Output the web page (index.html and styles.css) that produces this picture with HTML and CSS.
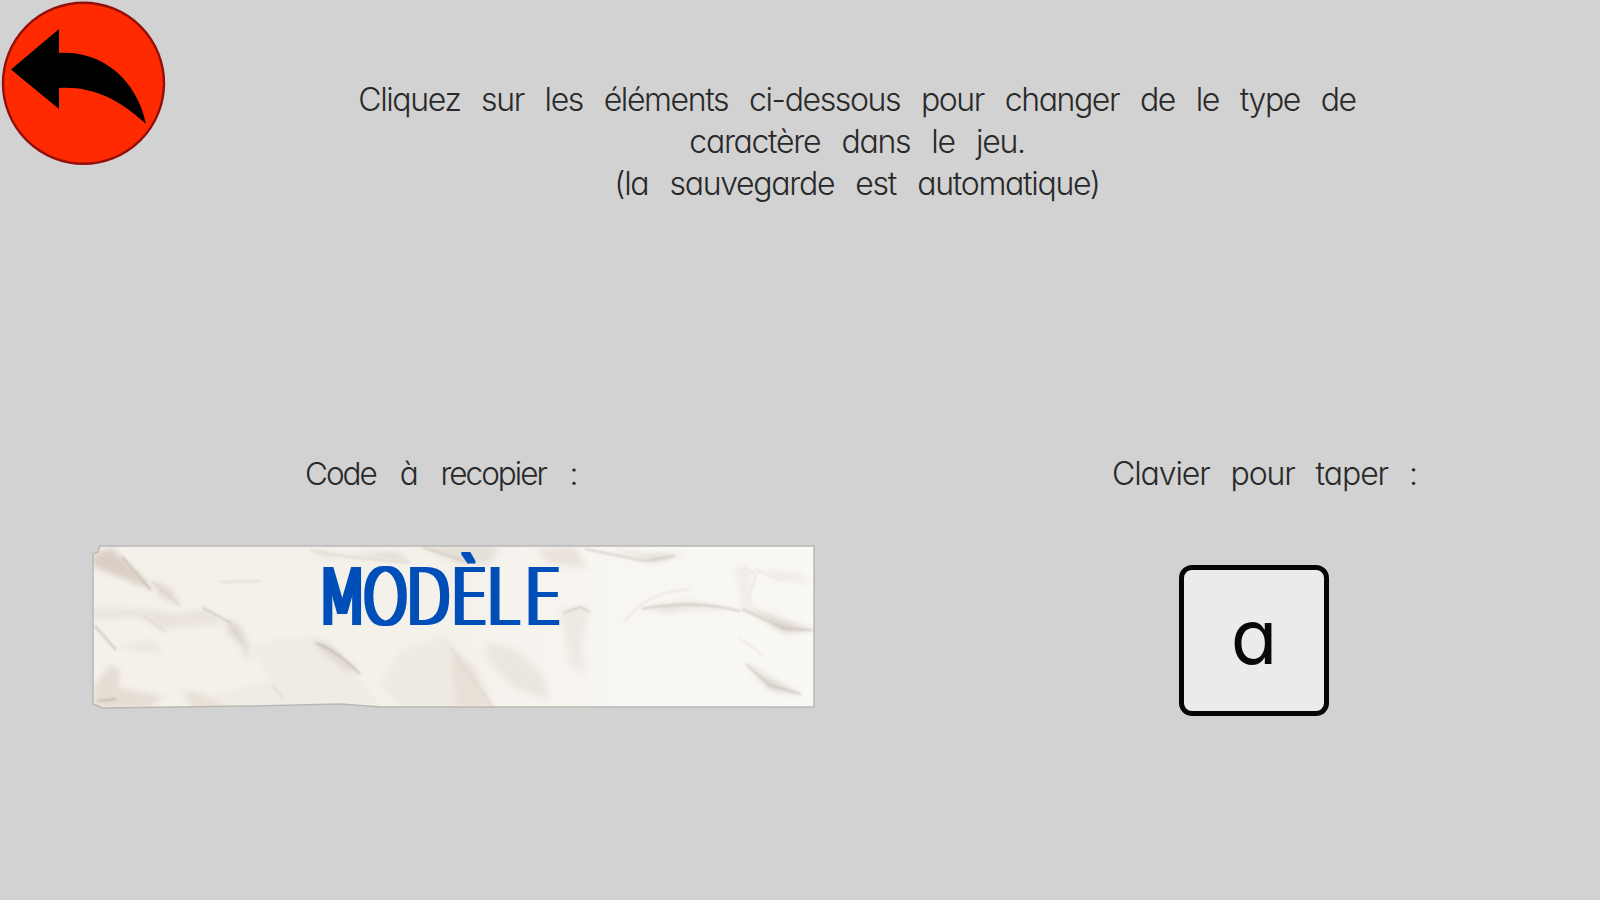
FILE: index.html
```html
<!DOCTYPE html>
<html lang="fr">
<head>
<meta charset="utf-8">
<title>Type de caractère</title>
<link rel="stylesheet" href="styles.css">
</head>
<body>
<main class="page">
  <header class="header">
    <a class="back" aria-label="Retour">
      <svg width="168" height="168" viewBox="0 0 168 168">
        <circle cx="83.5" cy="83.2" r="80.5" fill="#ff2a00" stroke="#920f0b" stroke-width="2.4"/>
        <path d="M11 69.5 L59 29 V53 C98 50 136 76 146 124 C119 99 92 86 59 88 V109 Z" fill="#000"/>
      </svg>
    </a>
    <p class="intro">
      <span class="line line-one">Cliquez sur les éléments ci-dessous pour changer de le type de</span>
      <span class="line">caractère dans le jeu.</span>
      <span class="line">(la sauvegarde est automatique)</span>
    </p>
  </header>
  <div class="choices">
    <section class="choice choice-model">
      <h2 class="label label-model">Code à recopier :</h2>
      <svg class="paper" width="724" height="166" viewBox="92 544 724 166">
        <defs>
          <clipPath id="sheet"><path d="M100 546 H814 V707 H382 L340 704 L250 706 L102 708 L93 704 V554 L98 552Z"/></clipPath>
          <filter id="soft" x="-10%" y="-10%" width="120%" height="120%"><feGaussianBlur stdDeviation="3"/></filter>
          <filter id="fine" x="-10%" y="-10%" width="120%" height="120%"><feGaussianBlur stdDeviation="1.1"/></filter>
          <filter id="broad" x="-10%" y="-30%" width="120%" height="160%"><feMorphology operator="dilate" radius="3 1"/></filter>
          <linearGradient id="base"><stop offset="0" stop-color="#f4f1eb"/><stop offset=".5" stop-color="#f4f1eb"/><stop offset=".72" stop-color="#f8f6f2"/><stop offset="1" stop-color="#f9f8f5"/></linearGradient>
        </defs>
        <g clip-path="url(#sheet)">
          <rect x="92" y="544" width="724" height="166" fill="url(#base)"/>
          <g filter="url(#soft)">
            <path d="M92 554 L112 548 L145 580 L152 590 L120 577 L92 566Z" fill="#dacfc4"/>
            <path d="M152 580 L170 588 L182 606 L160 597Z" fill="#e2d9d0"/>
            <path d="M93 608 L150 609 L180 614 L205 608 L225 624 L180 627 L163 631 L140 617 L93 619Z" fill="#e9e3dc"/>
            <path d="M228 620 L240 624 L249 645 L248 662 L240 645 L226 632Z" fill="#e2dbd4"/>
            <path d="M250 648 L278 638 L315 638 L340 655 L365 688 L385 707 H200 L225 690 L270 680Z" fill="#f0ebe5"/>
            <path d="M310 638 L330 645 L360 674 L345 669 L327 655Z" fill="#ddd5cc"/>
            <path d="M94 687 L110 665 L120 670 L118 688 L165 697 L148 708 H93Z" fill="#e5dcd3"/>
            <path d="M116 647 L150 640 L165 652 L140 651Z" fill="#ebe6df"/>
            <path d="M180 690 L200 693 L230 708 H194Z" fill="#e8dfd6"/>
            <path d="M310 550 L340 556 L395 552 L411 562 L370 557 L325 557Z" fill="#dedad1"/>
            <path d="M420 546 H500 L490 563 L460 564Z" fill="#e4dfd7"/>
            <path d="M535 549 L575 547 L588 568 L550 564Z" fill="#e9e2da"/>
            <path d="M560 611 L581 605 L590 611 L582 642 L585 676 L570 665Z" fill="#eee9e3"/>
            <path d="M400 650 L445 635 L462 653 L485 690 L494 708 H399 L380 684Z" fill="#efeae3"/>
            <path d="M451 650 L474 667 L493 708 H455Z" fill="#e8e0d7"/>
            <path d="M485 642 L515 649 L543 675 L550 700 L512 687 L488 660Z" fill="#ebe6df"/>
            <path d="M645 608 L690 602 L735 610 L690 608 L665 612Z" fill="#e3ddd5"/>
            <path d="M742 605 L775 617 L813 630 L784 633 L765 620Z" fill="#ddd5cc"/>
            <path d="M746 663 L768 677 L800 694 L770 690Z" fill="#dcd7cf"/>
            <path d="M735 565 L752 568 L748 598 L756 608 L742 610Z" fill="#f0ede7"/>
            <path d="M610 549 L648 555 L684 554 L655 562Z" fill="#ddd7ce"/>
            <path d="M760 569 L782 580 L813 583 L800 574Z" fill="#efeae5"/>
          </g>
          <g filter="url(#fine)" fill="none" stroke-width="1.4">
            <path d="M122 557 L151 590 M95 626 L116 650 M203 608 L231 623 M316 643 Q338 651 360 674" stroke="#bdb5aa"/>
            <path d="M152 581 L180 606 M143 615 L165 632 M230 623 L244 645 M273 686 L282 698" stroke="#dbd3c9"/>
            <path d="M220 582 L260 581 M310 550 Q355 560 411 562 M450 647 L493 708" stroke="#ddd7ce"/>
            <path d="M423 547 L470 563 M585 549 L645 561 L675 556 M563 613 L580 607 L590 612" stroke="#cec6bb"/>
            <path d="M642 609 Q695 599 740 611 M742 609 L785 629 L813 630 M746 664 L769 685 L801 694" stroke="#c9c1b7"/>
            <path d="M624 622 Q645 592 690 589 M744 567 L756 575 L748 600 M755 570 L780 580 M739 638 L763 655" stroke="#e8e3dc"/>
            <path d="M98 701 L116 699" stroke="#b9b2aa"/>
          </g>
        </g>
        <path d="M100 546 H814 V707 H382 L340 704 L250 706 L102 708 L93 704 V554 L98 552Z" fill="none" stroke="#b9b8b4" stroke-width="1.5"/>
        <g class="model" filter="url(#broad)">
          <text transform="translate(317 624) scale(.76 1)" x="0 60 117 176 223 273">MODÈLE</text>
        </g>
      </svg>
    </section>
    <section class="choice choice-keyboard">
      <h2 class="label label-keyboard">Clavier pour taper :</h2>
      <div class="key"><span class="key-letter">a</span></div>
    </section>
  </div>
</main>
</body>
</html>
```

FILE: styles.css
```css
* { box-sizing: border-box; }
body {
  margin: 0;
  background: #d2d2d2;
  color: #292929;
  font-family: Inter, "Open Sans", sans-serif;
  font-feature-settings: "cv11";
}
.page { width: 1600px; height: 900px; overflow: hidden; }
.header { display: flex; height: 440px; }
.back { display: block; width: 168px; height: 168px; }
.intro {
  margin: 0;
  padding: 79px 0 0 189px;
  width: 1189px;
  display: flex;
  flex-direction: column;
  align-items: center;
  font-size: 32px;
  font-weight: 300;
  line-height: 42px;
  letter-spacing: -1.3px;
  word-spacing: 13.5px;
}
.line { white-space: nowrap; }
.line-one { letter-spacing: -1.38px; word-spacing: 13.1px; }
.choices { display: flex; }
.label {
  margin: 0;
  font-size: 32px;
  font-weight: 300;
  line-height: 42px;
  white-space: nowrap;
  letter-spacing: -1.1px;
  word-spacing: 13px;
}
.choice { padding-top: 13px; }
.choice-model { width: 1100px; padding-left: 92px; }
.label-model { padding-left: 213px; font-size: 31.5px; letter-spacing: -2px; word-spacing: 17px; }
.paper { display: block; margin-top: 49px; }
.model { font-family: "DejaVu Sans", sans-serif; font-weight: 200; font-size: 77px; fill: #0450b8; }
.label-keyboard { padding-left: 12px; }
.key {
  display: flex;
  justify-content: center;
  margin: 70px 0 0 79px;
  width: 150px;
  height: 151px;
  border: 5px solid #050505;
  border-radius: 13px;
  background: #ebebeb;
}
.key-letter { font-size: 76px; line-height: 132px; color: #080808; }
```
